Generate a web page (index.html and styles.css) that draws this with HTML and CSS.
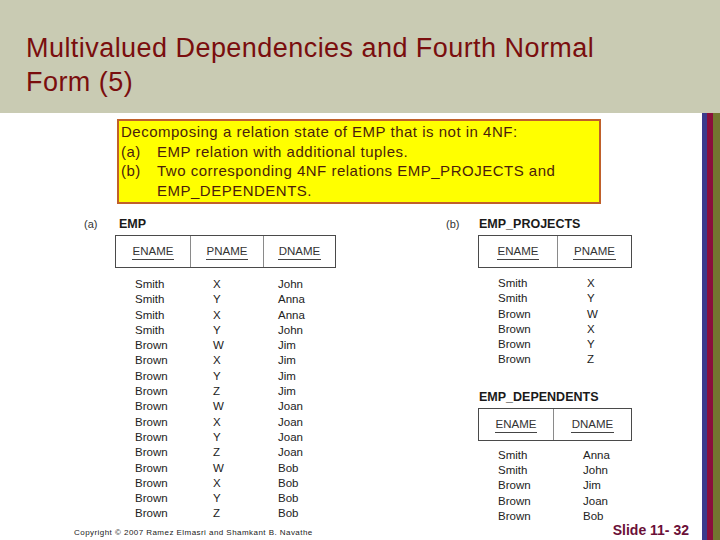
FILE: index.html
```html
<!DOCTYPE html>
<html>
<head>
<meta charset="utf-8">
<link rel="stylesheet" href="styles.css">
</head>
<body>
<div class="slide">
  <div class="header">
    <h1 class="title">Multivalued Dependencies and Fourth Normal<br>Form (5)</h1>
  </div>
  <div class="main">
    <div class="content">
      <div class="note">
        <div class="note-lead">Decomposing a relation state of EMP that is not in 4NF:</div>
        <div class="note-item"><span class="note-label">(a)</span><span>EMP relation with additional tuples.</span></div>
        <div class="note-item"><span class="note-label">(b)</span><span>Two corresponding 4NF relations EMP_PROJECTS and EMP_DEPENDENTS.</span></div>
      </div>

      <div class="figures">
        <div class="fig fig-a">
          <div class="fig-label">(a)</div>
          <div class="fig-body">
            <div class="rel-name">EMP</div>
            <div class="tbl tbl-emp">
              <div class="thead">
                <div class="th"><span>ENAME</span></div>
                <div class="th"><span>PNAME</span></div>
                <div class="th"><span>DNAME</span></div>
              </div>
              <div class="rows">
                <span>Smith</span><span>X</span><span>John</span>
                <span>Smith</span><span>Y</span><span>Anna</span>
                <span>Smith</span><span>X</span><span>Anna</span>
                <span>Smith</span><span>Y</span><span>John</span>
                <span>Brown</span><span>W</span><span>Jim</span>
                <span>Brown</span><span>X</span><span>Jim</span>
                <span>Brown</span><span>Y</span><span>Jim</span>
                <span>Brown</span><span>Z</span><span>Jim</span>
                <span>Brown</span><span>W</span><span>Joan</span>
                <span>Brown</span><span>X</span><span>Joan</span>
                <span>Brown</span><span>Y</span><span>Joan</span>
                <span>Brown</span><span>Z</span><span>Joan</span>
                <span>Brown</span><span>W</span><span>Bob</span>
                <span>Brown</span><span>X</span><span>Bob</span>
                <span>Brown</span><span>Y</span><span>Bob</span>
                <span>Brown</span><span>Z</span><span>Bob</span>
              </div>
            </div>
          </div>
        </div>

        <div class="fig fig-b">
          <div class="fig-label">(b)</div>
          <div class="fig-body">
            <div class="rel-name">EMP_PROJECTS</div>
            <div class="tbl tbl-proj">
              <div class="thead">
                <div class="th"><span>ENAME</span></div>
                <div class="th"><span>PNAME</span></div>
              </div>
              <div class="rows">
                <span>Smith</span><span>X</span>
                <span>Smith</span><span>Y</span>
                <span>Brown</span><span>W</span>
                <span>Brown</span><span>X</span>
                <span>Brown</span><span>Y</span>
                <span>Brown</span><span>Z</span>
              </div>
            </div>

            <div class="rel-name rel-second">EMP_DEPENDENTS</div>
            <div class="tbl tbl-dep">
              <div class="thead">
                <div class="th"><span>ENAME</span></div>
                <div class="th"><span>DNAME</span></div>
              </div>
              <div class="rows">
                <span>Smith</span><span>Anna</span>
                <span>Smith</span><span>John</span>
                <span>Brown</span><span>Jim</span>
                <span>Brown</span><span>Joan</span>
                <span>Brown</span><span>Bob</span>
              </div>
            </div>
          </div>
        </div>
      </div>

      <div class="footer">
        <span class="copyright">Copyright © 2007 Ramez Elmasri and Shamkant B. Navathe</span>
        <span class="slide-no">Slide 11- 32</span>
      </div>
    </div>
    <div class="stripes">
      <div class="stripe stripe-blue"></div>
      <div class="stripe stripe-red"></div>
      <div class="stripe stripe-olive"></div>
    </div>
  </div>
</div>
</body>
</html>
```

FILE: styles.css
```css
* { box-sizing: border-box; }

html, body {
  margin: 0;
  padding: 0;
  background: #ffffff;
}

.slide {
  width: 720px;
  height: 540px;
  display: flex;
  flex-direction: column;
  overflow: hidden;
  font-family: "Liberation Sans", Arial, sans-serif;
}

.header {
  height: 113px;
  flex: none;
  background: #c9cbb3;
  padding: 31px 0 0 26px;
}

.title {
  margin: 0;
  font-weight: normal;
  font-size: 27px;
  letter-spacing: 0.45px;
  line-height: 34px;
  color: #7a0e0e;
}

.main {
  flex: 1;
  display: flex;
  min-height: 0;
}

.content {
  flex: 1;
  display: flex;
  flex-direction: column;
  padding-top: 6px;
}

.stripes {
  width: 18px;
  flex: none;
  display: flex;
}

.stripe-blue { width: 5px; background: #3b3a8c; }
.stripe-red { width: 6px; background: #8a0f3c; }
.stripe-olive { width: 7px; background: #737630; }

/* yellow note */
.note {
  margin-left: 117px;
  width: 484px;
  height: 85px;
  background: #ffff00;
  border: 2px solid #c0602a;
  padding: 1px 4px 0 2px;
  font-size: 15px;
  letter-spacing: 0.5px;
  line-height: 19.6px;
  color: #4a1d0c;
}

.note-item {
  display: flex;
}

.note-label {
  width: 36px;
  flex: none;
}

/* figures */
.figures {
  display: flex;
  margin-top: 13px;
  padding-left: 84px;
  height: 306px;
  color: #222;
}

.fig {
  display: flex;
}

.fig-a { width: 362px; }

.fig-label {
  font-size: 11px;
  line-height: 14px;
  color: #333;
}

.fig-a .fig-label { width: 35px; }
.fig-b .fig-label { width: 33px; }

.rel-name {
  font-weight: bold;
  font-size: 12.5px;
  line-height: 14px;
  color: #1a1a1a;
}

.rel-second { margin-top: 22px; }

.tbl {
  margin-top: 4px;
  font-size: 11.5px;
}

.tbl-emp { margin-left: -4px; width: 221px; }
.tbl-proj, .tbl-dep { margin-left: -1px; width: 154px; }

.thead {
  display: grid;
  height: 33px;
  border: 1px solid #4a4a4a;
}

.tbl-emp .thead { grid-template-columns: 74px 73px 1fr; }
.tbl-proj .thead { grid-template-columns: 78px 1fr; }
.tbl-dep .thead { grid-template-columns: 74px 1fr; }

.th {
  display: flex;
  align-items: center;
  justify-content: center;
  padding-top: 2px;
  color: #333;
}

.th + .th { border-left: 1px solid #8a8a8a; }

.th span {
  border-bottom: 1px solid #444;
  padding: 0 1px 1px;
  line-height: 13px;
}

.rows {
  display: grid;
  line-height: 15.3px;
  color: #222;
}

.tbl-emp .rows {
  margin-top: 9px;
  padding-left: 20px;
  grid-template-columns: 78px 65px auto;
}

.tbl-proj .rows {
  margin-top: 8px;
  padding-left: 20px;
  grid-template-columns: 89px auto;
}

.tbl-dep .rows {
  margin-top: 7px;
  padding-left: 20px;
  grid-template-columns: 85px auto;
}

/* footer */
.footer {
  display: flex;
  justify-content: space-between;
  align-items: baseline;
  padding: 0 13px 0 74px;
  height: 14px;
  line-height: 14px;
}

.copyright {
  font-size: 8px;
  letter-spacing: 0.45px;
  color: #222;
}

.slide-no {
  font-size: 14px;
  font-weight: bold;
  color: #6b1038;
}
```
